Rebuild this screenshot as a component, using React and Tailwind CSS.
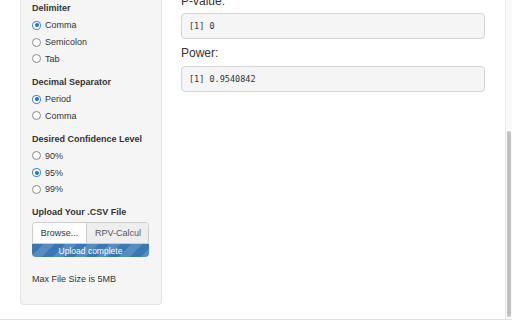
import React from 'react';

const Radio = ({ label, checked }) => (
  <label className="flex items-center h-[16.7px]">
    {checked ? (
      <span className="w-[9px] h-[9px] rounded-full bg-[#3b86f0] flex items-center justify-center">
        <span className="w-[7px] h-[7px] rounded-full bg-white flex items-center justify-center">
          <span className="w-[4px] h-[4px] rounded-full bg-[#1a6fe6]" />
        </span>
      </span>
    ) : (
      <span className="w-[9px] h-[9px] rounded-full border border-[#8a8a8a] bg-white" />
    )}
    <span className="ml-[4px] text-[9px] leading-[12px] text-[#333]">{label}</span>
  </label>
);

const Group = ({ title, options, selected, className = '' }) => (
  <div className={className}>
    <div className="text-[9px] leading-[12px] font-bold text-[#333]">{title}</div>
    <div className="mt-[3px] flex flex-col">
      {options.map((o) => (
        <Radio key={o} label={o} checked={o === selected} />
      ))}
    </div>
  </div>
);

const Output = ({ text }) => (
  <pre className="h-[26px] flex items-center px-[7px] bg-[#f5f5f5] border border-[#d4d4d4] rounded-[4px] text-[8.5px] text-[#333] font-['DejaVu_Sans_Mono','Liberation_Mono',monospace]">
    {text}
  </pre>
);

export default function App() {
  return (
    <div className="w-[512px] h-[320px] flex overflow-hidden bg-white border-b border-[#e0e0e0] font-['Liberation_Sans',Arial,sans-serif]">
      <div className="flex-1 flex">
        {/* Sidebar */}
        <div className="ml-[20px] w-[142px] h-[305px] bg-[#f5f5f5] border-x border-b border-[#e3e3e3] rounded-b-[4px] pl-[11px] pr-[12px] pt-[2px]">
          <Group title="Delimiter" options={['Comma', 'Semicolon', 'Tab']} selected="Comma" />
          <Group className="mt-[8.6px]" title="Decimal Separator" options={['Period', 'Comma']} selected="Period" />
          <Group className="mt-[8.6px]" title="Desired Confidence Level" options={['90%', '95%', '99%']} selected="95%" />
          <div className="mt-[8px] text-[9px] leading-[12px] font-bold text-[#333]">Upload Your .CSV File</div>
          <div className="mt-[4.7px] flex h-[22px] border border-[#ccc] rounded-t-[4px] overflow-hidden">
            <div className="w-[54px] bg-white border-r border-[#ccc] flex items-center justify-center text-[9px] text-[#333]">Browse...</div>
            <div className="flex-1 bg-[#eee] flex items-center pl-[8px] overflow-hidden whitespace-nowrap text-[9px] text-[#555]">RPV-Calcul</div>
          </div>
          <div className="h-[13px] rounded-b-[4px] bg-[#3a78b5] bg-[linear-gradient(-45deg,rgba(255,255,255,.15)_25%,transparent_25%,transparent_50%,rgba(255,255,255,.15)_50%,rgba(255,255,255,.15)_75%,transparent_75%,transparent)] bg-[length:22px_22px] flex items-center justify-center text-[8.5px] text-white">
            Upload complete
          </div>
          <div className="mt-[16px] text-[9px] leading-[12px] text-[#333]">Max File Size is 5MB</div>
        </div>

        {/* Main */}
        <div className="ml-[19px] w-[304px] flex flex-col">
          <div className="-mt-[6px] text-[12px] leading-[14px] text-[#333]">P-value:</div>
          <div className="mt-[5px]">
            <Output text="[1] 0" />
          </div>
          <div className="mt-[6.7px] text-[12px] leading-[14px] text-[#333]">Power:</div>
          <div className="mt-[6.3px]">
            <Output text="[1] 0.9540842" />
          </div>
        </div>
      </div>

      {/* Scrollbar */}
      <div className="w-[7px] border-l border-[#e8e8e8] bg-[#fafafa] flex justify-center">
        <div className="mt-[131px] w-[4px] h-[186px] rounded-full bg-[#c1c1c1]" />
      </div>
    </div>
  );
}
